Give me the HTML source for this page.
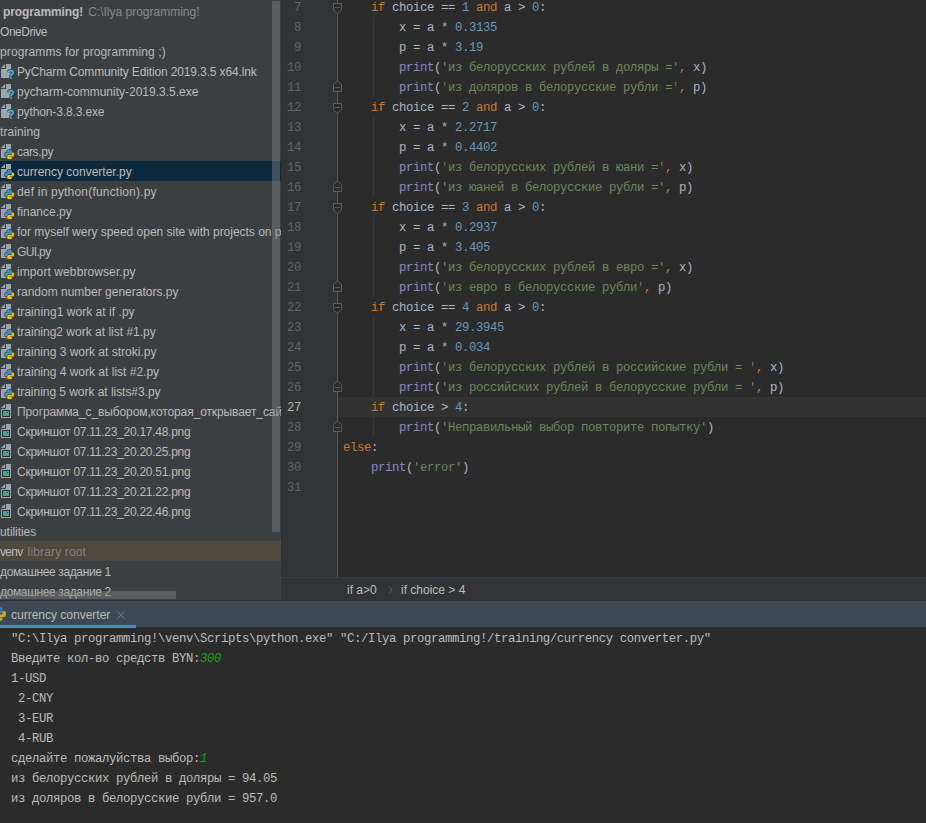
<!DOCTYPE html>
<html><head><meta charset="utf-8"><style>
*{margin:0;padding:0;box-sizing:border-box}
html,body{width:926px;height:823px;overflow:hidden;background:#2b2b2b}
body{position:relative;font-family:"Liberation Sans",sans-serif}
.abs{position:absolute}
#proj{position:absolute;left:0;top:0;width:281px;height:600px;background:#3c3f41;overflow:hidden}
.t{position:absolute;height:20px;line-height:20px;font-size:12px;color:#bbbbbb;white-space:pre}
.t b{font-weight:bold}
.g{color:#8a8a8a}
.sel{position:absolute;left:0;width:281px;height:20px;background:#0d293e}
.lib{position:absolute;left:0;width:281px;height:20px;background:#4d493d}
.ic{position:absolute;left:0;width:16px;height:16px}
.ic svg,.abs svg{display:block}
#vs{position:absolute;left:272px;top:1px;width:8px;height:531px;background:rgba(128,128,128,.45)}
#hs{position:absolute;left:0;top:591px;width:176px;height:8px;background:rgba(128,128,128,.45)}
#gut{position:absolute;left:281px;top:0;width:57px;height:577px;background:#313335}
#ed{position:absolute;left:338px;top:0;width:588px;height:577px;background:#2b2b2b;overflow:hidden}
#curl{position:absolute;left:338px;top:397px;width:588px;height:20px;background:#323232}
.cl{position:absolute;left:343px;height:20px;line-height:20px;font-family:"Liberation Mono",monospace;font-size:12.3px;letter-spacing:-0.381px;color:#a9b7c6;white-space:pre}
.k{color:#cc7832}.n{color:#6897bb}.s{color:#6a8759}.b{color:#8888c6}
.ln{position:absolute;left:281px;width:20px;text-align:right;height:20px;line-height:20px;font-family:"Liberation Mono",monospace;font-size:12.3px;letter-spacing:-0.381px;color:#606366}
.ln.cur{color:#b4b4b4}
.guide{position:absolute;left:373px;width:1px;background:#393939}
#foldline{position:absolute;left:337px;top:0;width:1px;height:577px;background:#555555}
#bc{position:absolute;left:281px;top:577px;width:645px;height:23px;background:#313335;border-top:1px solid #393b3d}
.bct{position:absolute;font-size:12px;color:#bbbbbb;white-space:pre;line-height:20px;height:20px}
#tabbar{position:absolute;left:0;top:600px;width:926px;height:27px;background:#3d4854;border-top:1px solid #303030}
#tabul{position:absolute;left:0;top:625px;width:136px;height:3px;background:#4a88c7}
#con{position:absolute;left:0;top:628px;width:926px;height:195px;background:#2b2b2b}
.co{position:absolute;left:11px;height:20px;line-height:20px;font-family:"Liberation Mono",monospace;font-size:12.3px;letter-spacing:-0.381px;color:#bbbbbb;white-space:pre}
.in{color:#14a014;font-style:italic}
</style></head><body>
<div id="proj">
<div class="t" style="top:2px;left:3px"><b style="letter-spacing:-0.1px">programming!</b><span class="g" style="margin-left:5px">C:\Ilya programming!</span></div>
<div class="t" style="top:22px;left:0px;letter-spacing:-0.457px;">OneDrive</div>
<div class="t" style="top:42px;left:0px;letter-spacing:0.111px;">programms for programming ;)</div>
<div class="ic" style="top:63px"><svg width="16" height="16" viewBox="0 0 16 16"><path d="M1 5L5 1V5Z" fill="#9aa7b0"/><rect x="6" y="1" width="5" height="5" fill="#9aa7b0"/><rect x="1" y="6" width="10" height="9" fill="#9aa7b0"/><path d="M8.6 9.5Q8.8 7.6 10.9 7.6Q13.2 7.6 13.2 9.6Q13.2 10.9 11.8 11.6Q11 12 11 13.4" fill="none" stroke="#3c3f41" stroke-width="3.4"/><circle cx="11" cy="15.1" r="1.9" fill="#3c3f41"/><path d="M8.6 9.5Q8.8 7.6 10.9 7.6Q13.2 7.6 13.2 9.6Q13.2 10.9 11.8 11.6Q11 12 11 13.4" fill="none" stroke="#40b6e0" stroke-width="1.7"/><circle cx="11" cy="15.1" r="0.95" fill="#40b6e0"/></svg></div>
<div class="t" style="top:62px;left:17px;letter-spacing:-0.139px;">PyCharm Community Edition 2019.3.5 x64.lnk</div>
<div class="ic" style="top:83px"><svg width="16" height="16" viewBox="0 0 16 16"><path d="M1 5L5 1V5Z" fill="#9aa7b0"/><rect x="6" y="1" width="5" height="5" fill="#9aa7b0"/><rect x="1" y="6" width="10" height="9" fill="#9aa7b0"/><path d="M8.6 9.5Q8.8 7.6 10.9 7.6Q13.2 7.6 13.2 9.6Q13.2 10.9 11.8 11.6Q11 12 11 13.4" fill="none" stroke="#3c3f41" stroke-width="3.4"/><circle cx="11" cy="15.1" r="1.9" fill="#3c3f41"/><path d="M8.6 9.5Q8.8 7.6 10.9 7.6Q13.2 7.6 13.2 9.6Q13.2 10.9 11.8 11.6Q11 12 11 13.4" fill="none" stroke="#40b6e0" stroke-width="1.7"/><circle cx="11" cy="15.1" r="0.95" fill="#40b6e0"/></svg></div>
<div class="t" style="top:82px;left:17px;">pycharm-community-2019.3.5.exe</div>
<div class="ic" style="top:103px"><svg width="16" height="16" viewBox="0 0 16 16"><path d="M1 5L5 1V5Z" fill="#9aa7b0"/><rect x="6" y="1" width="5" height="5" fill="#9aa7b0"/><rect x="1" y="6" width="10" height="9" fill="#9aa7b0"/><path d="M8.6 9.5Q8.8 7.6 10.9 7.6Q13.2 7.6 13.2 9.6Q13.2 10.9 11.8 11.6Q11 12 11 13.4" fill="none" stroke="#3c3f41" stroke-width="3.4"/><circle cx="11" cy="15.1" r="1.9" fill="#3c3f41"/><path d="M8.6 9.5Q8.8 7.6 10.9 7.6Q13.2 7.6 13.2 9.6Q13.2 10.9 11.8 11.6Q11 12 11 13.4" fill="none" stroke="#40b6e0" stroke-width="1.7"/><circle cx="11" cy="15.1" r="0.95" fill="#40b6e0"/></svg></div>
<div class="t" style="top:102px;left:17px;letter-spacing:-0.127px;">python-3.8.3.exe</div>
<div class="t" style="top:122px;left:0px;letter-spacing:0.086px;">training</div>
<div class="ic" style="top:143px"><svg width="16" height="16" viewBox="0 0 16 16"><path d="M1 5L5 1V5Z" fill="#9aa7b0"/><rect x="6" y="1" width="5" height="5" fill="#9aa7b0"/><rect x="1" y="6" width="10" height="9" fill="#9aa7b0"/><g transform="translate(4.3 6.3) scale(0.66)"><path d="M7.5 1C5 1 4.5 2 4.5 3V4.5H8V5H3C1.5 5 1 6.5 1 8C1 9.8 1.7 11 3 11H4.5V9C4.5 8 5.3 7.5 6.3 7.5H9.7C10.7 7.5 11.5 6.8 11.5 5.8V3C11.5 1.8 10.5 1 9 1Z" fill="#3c3f41" stroke="#3c3f41" stroke-width="2.2"/><path d="M7.5 1C5 1 4.5 2 4.5 3V4.5H8V5H3C1.5 5 1 6.5 1 8C1 9.8 1.7 11 3 11H4.5V9C4.5 8 5.3 7.5 6.3 7.5H9.7C10.7 7.5 11.5 6.8 11.5 5.8V3C11.5 1.8 10.5 1 9 1Z" fill="#3c3f41" stroke="#3c3f41" stroke-width="2.2" transform="rotate(180 8 8)"/></g><g transform="translate(4.3 6.3) scale(0.66)"><path d="M7.5 1C5 1 4.5 2 4.5 3V4.5H8V5H3C1.5 5 1 6.5 1 8C1 9.8 1.7 11 3 11H4.5V9C4.5 8 5.3 7.5 6.3 7.5H9.7C10.7 7.5 11.5 6.8 11.5 5.8V3C11.5 1.8 10.5 1 9 1Z" fill="#3d92c9"/><path d="M7.5 1C5 1 4.5 2 4.5 3V4.5H8V5H3C1.5 5 1 6.5 1 8C1 9.8 1.7 11 3 11H4.5V9C4.5 8 5.3 7.5 6.3 7.5H9.7C10.7 7.5 11.5 6.8 11.5 5.8V3C11.5 1.8 10.5 1 9 1Z" fill="#f5c400" transform="rotate(180 8 8)"/></g></svg></div>
<div class="t" style="top:142px;left:17px;letter-spacing:-0.350px;">cars.py</div>
<div class="sel" style="top:161px"></div>
<div class="ic" style="top:163px"><svg width="16" height="16" viewBox="0 0 16 16"><path d="M1 5L5 1V5Z" fill="#9aa7b0"/><rect x="6" y="1" width="5" height="5" fill="#9aa7b0"/><rect x="1" y="6" width="10" height="9" fill="#9aa7b0"/><g transform="translate(4.3 6.3) scale(0.66)"><path d="M7.5 1C5 1 4.5 2 4.5 3V4.5H8V5H3C1.5 5 1 6.5 1 8C1 9.8 1.7 11 3 11H4.5V9C4.5 8 5.3 7.5 6.3 7.5H9.7C10.7 7.5 11.5 6.8 11.5 5.8V3C11.5 1.8 10.5 1 9 1Z" fill="#0d293e" stroke="#0d293e" stroke-width="2.2"/><path d="M7.5 1C5 1 4.5 2 4.5 3V4.5H8V5H3C1.5 5 1 6.5 1 8C1 9.8 1.7 11 3 11H4.5V9C4.5 8 5.3 7.5 6.3 7.5H9.7C10.7 7.5 11.5 6.8 11.5 5.8V3C11.5 1.8 10.5 1 9 1Z" fill="#0d293e" stroke="#0d293e" stroke-width="2.2" transform="rotate(180 8 8)"/></g><g transform="translate(4.3 6.3) scale(0.66)"><path d="M7.5 1C5 1 4.5 2 4.5 3V4.5H8V5H3C1.5 5 1 6.5 1 8C1 9.8 1.7 11 3 11H4.5V9C4.5 8 5.3 7.5 6.3 7.5H9.7C10.7 7.5 11.5 6.8 11.5 5.8V3C11.5 1.8 10.5 1 9 1Z" fill="#3d92c9"/><path d="M7.5 1C5 1 4.5 2 4.5 3V4.5H8V5H3C1.5 5 1 6.5 1 8C1 9.8 1.7 11 3 11H4.5V9C4.5 8 5.3 7.5 6.3 7.5H9.7C10.7 7.5 11.5 6.8 11.5 5.8V3C11.5 1.8 10.5 1 9 1Z" fill="#f5c400" transform="rotate(180 8 8)"/></g></svg></div>
<div class="t" style="top:162px;left:17px;">currency converter.py</div>
<div class="ic" style="top:183px"><svg width="16" height="16" viewBox="0 0 16 16"><path d="M1 5L5 1V5Z" fill="#9aa7b0"/><rect x="6" y="1" width="5" height="5" fill="#9aa7b0"/><rect x="1" y="6" width="10" height="9" fill="#9aa7b0"/><g transform="translate(4.3 6.3) scale(0.66)"><path d="M7.5 1C5 1 4.5 2 4.5 3V4.5H8V5H3C1.5 5 1 6.5 1 8C1 9.8 1.7 11 3 11H4.5V9C4.5 8 5.3 7.5 6.3 7.5H9.7C10.7 7.5 11.5 6.8 11.5 5.8V3C11.5 1.8 10.5 1 9 1Z" fill="#3c3f41" stroke="#3c3f41" stroke-width="2.2"/><path d="M7.5 1C5 1 4.5 2 4.5 3V4.5H8V5H3C1.5 5 1 6.5 1 8C1 9.8 1.7 11 3 11H4.5V9C4.5 8 5.3 7.5 6.3 7.5H9.7C10.7 7.5 11.5 6.8 11.5 5.8V3C11.5 1.8 10.5 1 9 1Z" fill="#3c3f41" stroke="#3c3f41" stroke-width="2.2" transform="rotate(180 8 8)"/></g><g transform="translate(4.3 6.3) scale(0.66)"><path d="M7.5 1C5 1 4.5 2 4.5 3V4.5H8V5H3C1.5 5 1 6.5 1 8C1 9.8 1.7 11 3 11H4.5V9C4.5 8 5.3 7.5 6.3 7.5H9.7C10.7 7.5 11.5 6.8 11.5 5.8V3C11.5 1.8 10.5 1 9 1Z" fill="#3d92c9"/><path d="M7.5 1C5 1 4.5 2 4.5 3V4.5H8V5H3C1.5 5 1 6.5 1 8C1 9.8 1.7 11 3 11H4.5V9C4.5 8 5.3 7.5 6.3 7.5H9.7C10.7 7.5 11.5 6.8 11.5 5.8V3C11.5 1.8 10.5 1 9 1Z" fill="#f5c400" transform="rotate(180 8 8)"/></g></svg></div>
<div class="t" style="top:182px;left:17px;letter-spacing:0.192px;">def in python(function).py</div>
<div class="ic" style="top:203px"><svg width="16" height="16" viewBox="0 0 16 16"><path d="M1 5L5 1V5Z" fill="#9aa7b0"/><rect x="6" y="1" width="5" height="5" fill="#9aa7b0"/><rect x="1" y="6" width="10" height="9" fill="#9aa7b0"/><g transform="translate(4.3 6.3) scale(0.66)"><path d="M7.5 1C5 1 4.5 2 4.5 3V4.5H8V5H3C1.5 5 1 6.5 1 8C1 9.8 1.7 11 3 11H4.5V9C4.5 8 5.3 7.5 6.3 7.5H9.7C10.7 7.5 11.5 6.8 11.5 5.8V3C11.5 1.8 10.5 1 9 1Z" fill="#3c3f41" stroke="#3c3f41" stroke-width="2.2"/><path d="M7.5 1C5 1 4.5 2 4.5 3V4.5H8V5H3C1.5 5 1 6.5 1 8C1 9.8 1.7 11 3 11H4.5V9C4.5 8 5.3 7.5 6.3 7.5H9.7C10.7 7.5 11.5 6.8 11.5 5.8V3C11.5 1.8 10.5 1 9 1Z" fill="#3c3f41" stroke="#3c3f41" stroke-width="2.2" transform="rotate(180 8 8)"/></g><g transform="translate(4.3 6.3) scale(0.66)"><path d="M7.5 1C5 1 4.5 2 4.5 3V4.5H8V5H3C1.5 5 1 6.5 1 8C1 9.8 1.7 11 3 11H4.5V9C4.5 8 5.3 7.5 6.3 7.5H9.7C10.7 7.5 11.5 6.8 11.5 5.8V3C11.5 1.8 10.5 1 9 1Z" fill="#3d92c9"/><path d="M7.5 1C5 1 4.5 2 4.5 3V4.5H8V5H3C1.5 5 1 6.5 1 8C1 9.8 1.7 11 3 11H4.5V9C4.5 8 5.3 7.5 6.3 7.5H9.7C10.7 7.5 11.5 6.8 11.5 5.8V3C11.5 1.8 10.5 1 9 1Z" fill="#f5c400" transform="rotate(180 8 8)"/></g></svg></div>
<div class="t" style="top:202px;left:17px;">finance.py</div>
<div class="ic" style="top:223px"><svg width="16" height="16" viewBox="0 0 16 16"><path d="M1 5L5 1V5Z" fill="#9aa7b0"/><rect x="6" y="1" width="5" height="5" fill="#9aa7b0"/><rect x="1" y="6" width="10" height="9" fill="#9aa7b0"/><g transform="translate(4.3 6.3) scale(0.66)"><path d="M7.5 1C5 1 4.5 2 4.5 3V4.5H8V5H3C1.5 5 1 6.5 1 8C1 9.8 1.7 11 3 11H4.5V9C4.5 8 5.3 7.5 6.3 7.5H9.7C10.7 7.5 11.5 6.8 11.5 5.8V3C11.5 1.8 10.5 1 9 1Z" fill="#3c3f41" stroke="#3c3f41" stroke-width="2.2"/><path d="M7.5 1C5 1 4.5 2 4.5 3V4.5H8V5H3C1.5 5 1 6.5 1 8C1 9.8 1.7 11 3 11H4.5V9C4.5 8 5.3 7.5 6.3 7.5H9.7C10.7 7.5 11.5 6.8 11.5 5.8V3C11.5 1.8 10.5 1 9 1Z" fill="#3c3f41" stroke="#3c3f41" stroke-width="2.2" transform="rotate(180 8 8)"/></g><g transform="translate(4.3 6.3) scale(0.66)"><path d="M7.5 1C5 1 4.5 2 4.5 3V4.5H8V5H3C1.5 5 1 6.5 1 8C1 9.8 1.7 11 3 11H4.5V9C4.5 8 5.3 7.5 6.3 7.5H9.7C10.7 7.5 11.5 6.8 11.5 5.8V3C11.5 1.8 10.5 1 9 1Z" fill="#3d92c9"/><path d="M7.5 1C5 1 4.5 2 4.5 3V4.5H8V5H3C1.5 5 1 6.5 1 8C1 9.8 1.7 11 3 11H4.5V9C4.5 8 5.3 7.5 6.3 7.5H9.7C10.7 7.5 11.5 6.8 11.5 5.8V3C11.5 1.8 10.5 1 9 1Z" fill="#f5c400" transform="rotate(180 8 8)"/></g></svg></div>
<div class="t" style="top:222px;left:17px;letter-spacing:-0.021px;">for myself wery speed open site with projects on pycharm.py</div>
<div class="ic" style="top:243px"><svg width="16" height="16" viewBox="0 0 16 16"><path d="M1 5L5 1V5Z" fill="#9aa7b0"/><rect x="6" y="1" width="5" height="5" fill="#9aa7b0"/><rect x="1" y="6" width="10" height="9" fill="#9aa7b0"/><g transform="translate(4.3 6.3) scale(0.66)"><path d="M7.5 1C5 1 4.5 2 4.5 3V4.5H8V5H3C1.5 5 1 6.5 1 8C1 9.8 1.7 11 3 11H4.5V9C4.5 8 5.3 7.5 6.3 7.5H9.7C10.7 7.5 11.5 6.8 11.5 5.8V3C11.5 1.8 10.5 1 9 1Z" fill="#3c3f41" stroke="#3c3f41" stroke-width="2.2"/><path d="M7.5 1C5 1 4.5 2 4.5 3V4.5H8V5H3C1.5 5 1 6.5 1 8C1 9.8 1.7 11 3 11H4.5V9C4.5 8 5.3 7.5 6.3 7.5H9.7C10.7 7.5 11.5 6.8 11.5 5.8V3C11.5 1.8 10.5 1 9 1Z" fill="#3c3f41" stroke="#3c3f41" stroke-width="2.2" transform="rotate(180 8 8)"/></g><g transform="translate(4.3 6.3) scale(0.66)"><path d="M7.5 1C5 1 4.5 2 4.5 3V4.5H8V5H3C1.5 5 1 6.5 1 8C1 9.8 1.7 11 3 11H4.5V9C4.5 8 5.3 7.5 6.3 7.5H9.7C10.7 7.5 11.5 6.8 11.5 5.8V3C11.5 1.8 10.5 1 9 1Z" fill="#3d92c9"/><path d="M7.5 1C5 1 4.5 2 4.5 3V4.5H8V5H3C1.5 5 1 6.5 1 8C1 9.8 1.7 11 3 11H4.5V9C4.5 8 5.3 7.5 6.3 7.5H9.7C10.7 7.5 11.5 6.8 11.5 5.8V3C11.5 1.8 10.5 1 9 1Z" fill="#f5c400" transform="rotate(180 8 8)"/></g></svg></div>
<div class="t" style="top:242px;left:17px;letter-spacing:-0.640px;">GUI.py</div>
<div class="ic" style="top:263px"><svg width="16" height="16" viewBox="0 0 16 16"><path d="M1 5L5 1V5Z" fill="#9aa7b0"/><rect x="6" y="1" width="5" height="5" fill="#9aa7b0"/><rect x="1" y="6" width="10" height="9" fill="#9aa7b0"/><g transform="translate(4.3 6.3) scale(0.66)"><path d="M7.5 1C5 1 4.5 2 4.5 3V4.5H8V5H3C1.5 5 1 6.5 1 8C1 9.8 1.7 11 3 11H4.5V9C4.5 8 5.3 7.5 6.3 7.5H9.7C10.7 7.5 11.5 6.8 11.5 5.8V3C11.5 1.8 10.5 1 9 1Z" fill="#3c3f41" stroke="#3c3f41" stroke-width="2.2"/><path d="M7.5 1C5 1 4.5 2 4.5 3V4.5H8V5H3C1.5 5 1 6.5 1 8C1 9.8 1.7 11 3 11H4.5V9C4.5 8 5.3 7.5 6.3 7.5H9.7C10.7 7.5 11.5 6.8 11.5 5.8V3C11.5 1.8 10.5 1 9 1Z" fill="#3c3f41" stroke="#3c3f41" stroke-width="2.2" transform="rotate(180 8 8)"/></g><g transform="translate(4.3 6.3) scale(0.66)"><path d="M7.5 1C5 1 4.5 2 4.5 3V4.5H8V5H3C1.5 5 1 6.5 1 8C1 9.8 1.7 11 3 11H4.5V9C4.5 8 5.3 7.5 6.3 7.5H9.7C10.7 7.5 11.5 6.8 11.5 5.8V3C11.5 1.8 10.5 1 9 1Z" fill="#3d92c9"/><path d="M7.5 1C5 1 4.5 2 4.5 3V4.5H8V5H3C1.5 5 1 6.5 1 8C1 9.8 1.7 11 3 11H4.5V9C4.5 8 5.3 7.5 6.3 7.5H9.7C10.7 7.5 11.5 6.8 11.5 5.8V3C11.5 1.8 10.5 1 9 1Z" fill="#f5c400" transform="rotate(180 8 8)"/></g></svg></div>
<div class="t" style="top:262px;left:17px;letter-spacing:0.095px;">import webbrowser.py</div>
<div class="ic" style="top:283px"><svg width="16" height="16" viewBox="0 0 16 16"><path d="M1 5L5 1V5Z" fill="#9aa7b0"/><rect x="6" y="1" width="5" height="5" fill="#9aa7b0"/><rect x="1" y="6" width="10" height="9" fill="#9aa7b0"/><g transform="translate(4.3 6.3) scale(0.66)"><path d="M7.5 1C5 1 4.5 2 4.5 3V4.5H8V5H3C1.5 5 1 6.5 1 8C1 9.8 1.7 11 3 11H4.5V9C4.5 8 5.3 7.5 6.3 7.5H9.7C10.7 7.5 11.5 6.8 11.5 5.8V3C11.5 1.8 10.5 1 9 1Z" fill="#3c3f41" stroke="#3c3f41" stroke-width="2.2"/><path d="M7.5 1C5 1 4.5 2 4.5 3V4.5H8V5H3C1.5 5 1 6.5 1 8C1 9.8 1.7 11 3 11H4.5V9C4.5 8 5.3 7.5 6.3 7.5H9.7C10.7 7.5 11.5 6.8 11.5 5.8V3C11.5 1.8 10.5 1 9 1Z" fill="#3c3f41" stroke="#3c3f41" stroke-width="2.2" transform="rotate(180 8 8)"/></g><g transform="translate(4.3 6.3) scale(0.66)"><path d="M7.5 1C5 1 4.5 2 4.5 3V4.5H8V5H3C1.5 5 1 6.5 1 8C1 9.8 1.7 11 3 11H4.5V9C4.5 8 5.3 7.5 6.3 7.5H9.7C10.7 7.5 11.5 6.8 11.5 5.8V3C11.5 1.8 10.5 1 9 1Z" fill="#3d92c9"/><path d="M7.5 1C5 1 4.5 2 4.5 3V4.5H8V5H3C1.5 5 1 6.5 1 8C1 9.8 1.7 11 3 11H4.5V9C4.5 8 5.3 7.5 6.3 7.5H9.7C10.7 7.5 11.5 6.8 11.5 5.8V3C11.5 1.8 10.5 1 9 1Z" fill="#f5c400" transform="rotate(180 8 8)"/></g></svg></div>
<div class="t" style="top:282px;left:17px;">random number generators.py</div>
<div class="ic" style="top:303px"><svg width="16" height="16" viewBox="0 0 16 16"><path d="M1 5L5 1V5Z" fill="#9aa7b0"/><rect x="6" y="1" width="5" height="5" fill="#9aa7b0"/><rect x="1" y="6" width="10" height="9" fill="#9aa7b0"/><g transform="translate(4.3 6.3) scale(0.66)"><path d="M7.5 1C5 1 4.5 2 4.5 3V4.5H8V5H3C1.5 5 1 6.5 1 8C1 9.8 1.7 11 3 11H4.5V9C4.5 8 5.3 7.5 6.3 7.5H9.7C10.7 7.5 11.5 6.8 11.5 5.8V3C11.5 1.8 10.5 1 9 1Z" fill="#3c3f41" stroke="#3c3f41" stroke-width="2.2"/><path d="M7.5 1C5 1 4.5 2 4.5 3V4.5H8V5H3C1.5 5 1 6.5 1 8C1 9.8 1.7 11 3 11H4.5V9C4.5 8 5.3 7.5 6.3 7.5H9.7C10.7 7.5 11.5 6.8 11.5 5.8V3C11.5 1.8 10.5 1 9 1Z" fill="#3c3f41" stroke="#3c3f41" stroke-width="2.2" transform="rotate(180 8 8)"/></g><g transform="translate(4.3 6.3) scale(0.66)"><path d="M7.5 1C5 1 4.5 2 4.5 3V4.5H8V5H3C1.5 5 1 6.5 1 8C1 9.8 1.7 11 3 11H4.5V9C4.5 8 5.3 7.5 6.3 7.5H9.7C10.7 7.5 11.5 6.8 11.5 5.8V3C11.5 1.8 10.5 1 9 1Z" fill="#3d92c9"/><path d="M7.5 1C5 1 4.5 2 4.5 3V4.5H8V5H3C1.5 5 1 6.5 1 8C1 9.8 1.7 11 3 11H4.5V9C4.5 8 5.3 7.5 6.3 7.5H9.7C10.7 7.5 11.5 6.8 11.5 5.8V3C11.5 1.8 10.5 1 9 1Z" fill="#f5c400" transform="rotate(180 8 8)"/></g></svg></div>
<div class="t" style="top:302px;left:17px;letter-spacing:0.039px;">training1 work at if .py</div>
<div class="ic" style="top:323px"><svg width="16" height="16" viewBox="0 0 16 16"><path d="M1 5L5 1V5Z" fill="#9aa7b0"/><rect x="6" y="1" width="5" height="5" fill="#9aa7b0"/><rect x="1" y="6" width="10" height="9" fill="#9aa7b0"/><g transform="translate(4.3 6.3) scale(0.66)"><path d="M7.5 1C5 1 4.5 2 4.5 3V4.5H8V5H3C1.5 5 1 6.5 1 8C1 9.8 1.7 11 3 11H4.5V9C4.5 8 5.3 7.5 6.3 7.5H9.7C10.7 7.5 11.5 6.8 11.5 5.8V3C11.5 1.8 10.5 1 9 1Z" fill="#3c3f41" stroke="#3c3f41" stroke-width="2.2"/><path d="M7.5 1C5 1 4.5 2 4.5 3V4.5H8V5H3C1.5 5 1 6.5 1 8C1 9.8 1.7 11 3 11H4.5V9C4.5 8 5.3 7.5 6.3 7.5H9.7C10.7 7.5 11.5 6.8 11.5 5.8V3C11.5 1.8 10.5 1 9 1Z" fill="#3c3f41" stroke="#3c3f41" stroke-width="2.2" transform="rotate(180 8 8)"/></g><g transform="translate(4.3 6.3) scale(0.66)"><path d="M7.5 1C5 1 4.5 2 4.5 3V4.5H8V5H3C1.5 5 1 6.5 1 8C1 9.8 1.7 11 3 11H4.5V9C4.5 8 5.3 7.5 6.3 7.5H9.7C10.7 7.5 11.5 6.8 11.5 5.8V3C11.5 1.8 10.5 1 9 1Z" fill="#3d92c9"/><path d="M7.5 1C5 1 4.5 2 4.5 3V4.5H8V5H3C1.5 5 1 6.5 1 8C1 9.8 1.7 11 3 11H4.5V9C4.5 8 5.3 7.5 6.3 7.5H9.7C10.7 7.5 11.5 6.8 11.5 5.8V3C11.5 1.8 10.5 1 9 1Z" fill="#f5c400" transform="rotate(180 8 8)"/></g></svg></div>
<div class="t" style="top:322px;left:17px;">training2 work at list #1.py</div>
<div class="ic" style="top:343px"><svg width="16" height="16" viewBox="0 0 16 16"><path d="M1 5L5 1V5Z" fill="#9aa7b0"/><rect x="6" y="1" width="5" height="5" fill="#9aa7b0"/><rect x="1" y="6" width="10" height="9" fill="#9aa7b0"/><g transform="translate(4.3 6.3) scale(0.66)"><path d="M7.5 1C5 1 4.5 2 4.5 3V4.5H8V5H3C1.5 5 1 6.5 1 8C1 9.8 1.7 11 3 11H4.5V9C4.5 8 5.3 7.5 6.3 7.5H9.7C10.7 7.5 11.5 6.8 11.5 5.8V3C11.5 1.8 10.5 1 9 1Z" fill="#3c3f41" stroke="#3c3f41" stroke-width="2.2"/><path d="M7.5 1C5 1 4.5 2 4.5 3V4.5H8V5H3C1.5 5 1 6.5 1 8C1 9.8 1.7 11 3 11H4.5V9C4.5 8 5.3 7.5 6.3 7.5H9.7C10.7 7.5 11.5 6.8 11.5 5.8V3C11.5 1.8 10.5 1 9 1Z" fill="#3c3f41" stroke="#3c3f41" stroke-width="2.2" transform="rotate(180 8 8)"/></g><g transform="translate(4.3 6.3) scale(0.66)"><path d="M7.5 1C5 1 4.5 2 4.5 3V4.5H8V5H3C1.5 5 1 6.5 1 8C1 9.8 1.7 11 3 11H4.5V9C4.5 8 5.3 7.5 6.3 7.5H9.7C10.7 7.5 11.5 6.8 11.5 5.8V3C11.5 1.8 10.5 1 9 1Z" fill="#3d92c9"/><path d="M7.5 1C5 1 4.5 2 4.5 3V4.5H8V5H3C1.5 5 1 6.5 1 8C1 9.8 1.7 11 3 11H4.5V9C4.5 8 5.3 7.5 6.3 7.5H9.7C10.7 7.5 11.5 6.8 11.5 5.8V3C11.5 1.8 10.5 1 9 1Z" fill="#f5c400" transform="rotate(180 8 8)"/></g></svg></div>
<div class="t" style="top:342px;left:17px;">training 3 work at stroki.py</div>
<div class="ic" style="top:363px"><svg width="16" height="16" viewBox="0 0 16 16"><path d="M1 5L5 1V5Z" fill="#9aa7b0"/><rect x="6" y="1" width="5" height="5" fill="#9aa7b0"/><rect x="1" y="6" width="10" height="9" fill="#9aa7b0"/><g transform="translate(4.3 6.3) scale(0.66)"><path d="M7.5 1C5 1 4.5 2 4.5 3V4.5H8V5H3C1.5 5 1 6.5 1 8C1 9.8 1.7 11 3 11H4.5V9C4.5 8 5.3 7.5 6.3 7.5H9.7C10.7 7.5 11.5 6.8 11.5 5.8V3C11.5 1.8 10.5 1 9 1Z" fill="#3c3f41" stroke="#3c3f41" stroke-width="2.2"/><path d="M7.5 1C5 1 4.5 2 4.5 3V4.5H8V5H3C1.5 5 1 6.5 1 8C1 9.8 1.7 11 3 11H4.5V9C4.5 8 5.3 7.5 6.3 7.5H9.7C10.7 7.5 11.5 6.8 11.5 5.8V3C11.5 1.8 10.5 1 9 1Z" fill="#3c3f41" stroke="#3c3f41" stroke-width="2.2" transform="rotate(180 8 8)"/></g><g transform="translate(4.3 6.3) scale(0.66)"><path d="M7.5 1C5 1 4.5 2 4.5 3V4.5H8V5H3C1.5 5 1 6.5 1 8C1 9.8 1.7 11 3 11H4.5V9C4.5 8 5.3 7.5 6.3 7.5H9.7C10.7 7.5 11.5 6.8 11.5 5.8V3C11.5 1.8 10.5 1 9 1Z" fill="#3d92c9"/><path d="M7.5 1C5 1 4.5 2 4.5 3V4.5H8V5H3C1.5 5 1 6.5 1 8C1 9.8 1.7 11 3 11H4.5V9C4.5 8 5.3 7.5 6.3 7.5H9.7C10.7 7.5 11.5 6.8 11.5 5.8V3C11.5 1.8 10.5 1 9 1Z" fill="#f5c400" transform="rotate(180 8 8)"/></g></svg></div>
<div class="t" style="top:362px;left:17px;">training 4 work at list #2.py</div>
<div class="ic" style="top:383px"><svg width="16" height="16" viewBox="0 0 16 16"><path d="M1 5L5 1V5Z" fill="#9aa7b0"/><rect x="6" y="1" width="5" height="5" fill="#9aa7b0"/><rect x="1" y="6" width="10" height="9" fill="#9aa7b0"/><g transform="translate(4.3 6.3) scale(0.66)"><path d="M7.5 1C5 1 4.5 2 4.5 3V4.5H8V5H3C1.5 5 1 6.5 1 8C1 9.8 1.7 11 3 11H4.5V9C4.5 8 5.3 7.5 6.3 7.5H9.7C10.7 7.5 11.5 6.8 11.5 5.8V3C11.5 1.8 10.5 1 9 1Z" fill="#3c3f41" stroke="#3c3f41" stroke-width="2.2"/><path d="M7.5 1C5 1 4.5 2 4.5 3V4.5H8V5H3C1.5 5 1 6.5 1 8C1 9.8 1.7 11 3 11H4.5V9C4.5 8 5.3 7.5 6.3 7.5H9.7C10.7 7.5 11.5 6.8 11.5 5.8V3C11.5 1.8 10.5 1 9 1Z" fill="#3c3f41" stroke="#3c3f41" stroke-width="2.2" transform="rotate(180 8 8)"/></g><g transform="translate(4.3 6.3) scale(0.66)"><path d="M7.5 1C5 1 4.5 2 4.5 3V4.5H8V5H3C1.5 5 1 6.5 1 8C1 9.8 1.7 11 3 11H4.5V9C4.5 8 5.3 7.5 6.3 7.5H9.7C10.7 7.5 11.5 6.8 11.5 5.8V3C11.5 1.8 10.5 1 9 1Z" fill="#3d92c9"/><path d="M7.5 1C5 1 4.5 2 4.5 3V4.5H8V5H3C1.5 5 1 6.5 1 8C1 9.8 1.7 11 3 11H4.5V9C4.5 8 5.3 7.5 6.3 7.5H9.7C10.7 7.5 11.5 6.8 11.5 5.8V3C11.5 1.8 10.5 1 9 1Z" fill="#f5c400" transform="rotate(180 8 8)"/></g></svg></div>
<div class="t" style="top:382px;left:17px;letter-spacing:-0.043px;">training 5 work at lists#3.py</div>
<div class="ic" style="top:403px"><svg width="16" height="16" viewBox="0 0 16 16"><path d="M1 5L5 1V5Z" fill="#9aa7b0"/><rect x="6" y="1" width="5" height="5" fill="#9aa7b0"/><rect x="1" y="6" width="10" height="9" fill="#9aa7b0"/><rect x="2" y="7" width="8" height="7" fill="#2f3234"/><rect x="3" y="8" width="6" height="5" fill="#3c9fcf"/><path d="M3 13V10.9Q4.6 9.4 6.2 10.3L9 12V13Z" fill="#5aa545"/><circle cx="7.5" cy="9.4" r="0.7" fill="#2f4a5a"/></svg></div>
<div class="t" style="top:402px;left:17px;letter-spacing:-0.104px;">Программа_с_выбором,которая_открывает_сайты.png</div>
<div class="ic" style="top:423px"><svg width="16" height="16" viewBox="0 0 16 16"><path d="M1 5L5 1V5Z" fill="#9aa7b0"/><rect x="6" y="1" width="5" height="5" fill="#9aa7b0"/><rect x="1" y="6" width="10" height="9" fill="#9aa7b0"/><rect x="2" y="7" width="8" height="7" fill="#2f3234"/><rect x="3" y="8" width="6" height="5" fill="#3c9fcf"/><path d="M3 13V10.9Q4.6 9.4 6.2 10.3L9 12V13Z" fill="#5aa545"/><circle cx="7.5" cy="9.4" r="0.7" fill="#2f4a5a"/></svg></div>
<div class="t" style="top:422px;left:17px;letter-spacing:-0.266px;">Скриншот 07.11.23_20.17.48.png</div>
<div class="ic" style="top:443px"><svg width="16" height="16" viewBox="0 0 16 16"><path d="M1 5L5 1V5Z" fill="#9aa7b0"/><rect x="6" y="1" width="5" height="5" fill="#9aa7b0"/><rect x="1" y="6" width="10" height="9" fill="#9aa7b0"/><rect x="2" y="7" width="8" height="7" fill="#2f3234"/><rect x="3" y="8" width="6" height="5" fill="#3c9fcf"/><path d="M3 13V10.9Q4.6 9.4 6.2 10.3L9 12V13Z" fill="#5aa545"/><circle cx="7.5" cy="9.4" r="0.7" fill="#2f4a5a"/></svg></div>
<div class="t" style="top:442px;left:17px;letter-spacing:-0.266px;">Скриншот 07.11.23_20.20.25.png</div>
<div class="ic" style="top:463px"><svg width="16" height="16" viewBox="0 0 16 16"><path d="M1 5L5 1V5Z" fill="#9aa7b0"/><rect x="6" y="1" width="5" height="5" fill="#9aa7b0"/><rect x="1" y="6" width="10" height="9" fill="#9aa7b0"/><rect x="2" y="7" width="8" height="7" fill="#2f3234"/><rect x="3" y="8" width="6" height="5" fill="#3c9fcf"/><path d="M3 13V10.9Q4.6 9.4 6.2 10.3L9 12V13Z" fill="#5aa545"/><circle cx="7.5" cy="9.4" r="0.7" fill="#2f4a5a"/></svg></div>
<div class="t" style="top:462px;left:17px;letter-spacing:-0.266px;">Скриншот 07.11.23_20.20.51.png</div>
<div class="ic" style="top:483px"><svg width="16" height="16" viewBox="0 0 16 16"><path d="M1 5L5 1V5Z" fill="#9aa7b0"/><rect x="6" y="1" width="5" height="5" fill="#9aa7b0"/><rect x="1" y="6" width="10" height="9" fill="#9aa7b0"/><rect x="2" y="7" width="8" height="7" fill="#2f3234"/><rect x="3" y="8" width="6" height="5" fill="#3c9fcf"/><path d="M3 13V10.9Q4.6 9.4 6.2 10.3L9 12V13Z" fill="#5aa545"/><circle cx="7.5" cy="9.4" r="0.7" fill="#2f4a5a"/></svg></div>
<div class="t" style="top:482px;left:17px;letter-spacing:-0.266px;">Скриншот 07.11.23_20.21.22.png</div>
<div class="ic" style="top:503px"><svg width="16" height="16" viewBox="0 0 16 16"><path d="M1 5L5 1V5Z" fill="#9aa7b0"/><rect x="6" y="1" width="5" height="5" fill="#9aa7b0"/><rect x="1" y="6" width="10" height="9" fill="#9aa7b0"/><rect x="2" y="7" width="8" height="7" fill="#2f3234"/><rect x="3" y="8" width="6" height="5" fill="#3c9fcf"/><path d="M3 13V10.9Q4.6 9.4 6.2 10.3L9 12V13Z" fill="#5aa545"/><circle cx="7.5" cy="9.4" r="0.7" fill="#2f4a5a"/></svg></div>
<div class="t" style="top:502px;left:17px;letter-spacing:-0.266px;">Скриншот 07.11.23_20.22.46.png</div>
<div class="t" style="top:522px;left:0px;letter-spacing:-0.062px;">utilities</div>
<div class="lib" style="top:541px"></div>
<div class="t" style="top:542px;left:0px"><span style="letter-spacing:-0.7px">venv</span><span class="g" style="margin-left:5px;color:#808080;letter-spacing:0.15px">library root</span></div>
<div class="t" style="top:562px;left:0px;letter-spacing:-0.365px;">домашнее задание 1</div>
<div class="t" style="top:582px;left:0px;letter-spacing:-0.365px;">домашнее задание 2</div>
<div id="vs"></div>
<div id="hs"></div>
</div>
<div id="gut"></div><div class="abs" style="left:281px;top:0;width:1px;height:600px;background:#2e3032"></div>
<div id="ed"></div>
<div id="curl"></div>
<div class="guide" style="top:17px;height:80px"></div>
<div class="guide" style="top:117px;height:80px"></div>
<div class="guide" style="top:217px;height:80px"></div>
<div class="guide" style="top:317px;height:80px"></div>
<div class="guide" style="top:417px;height:20px"></div>
<div id="foldline"></div>
<svg class="abs" style="left:0;top:0" width="926" height="577"><path d="M333.5 3.5 H341.5 V10.0 L337.5 13.5 L333.5 10.0 Z" fill="#2b2b2b" stroke="#5c5c5c"/><path d="M335 7.5 H340" stroke="#5c5c5c"/><path d="M333.5 103.5 H341.5 V110.0 L337.5 113.5 L333.5 110.0 Z" fill="#2b2b2b" stroke="#5c5c5c"/><path d="M335 107.5 H340" stroke="#5c5c5c"/><path d="M333.5 203.5 H341.5 V210.0 L337.5 213.5 L333.5 210.0 Z" fill="#2b2b2b" stroke="#5c5c5c"/><path d="M335 207.5 H340" stroke="#5c5c5c"/><path d="M333.5 303.5 H341.5 V310.0 L337.5 313.5 L333.5 310.0 Z" fill="#2b2b2b" stroke="#5c5c5c"/><path d="M335 307.5 H340" stroke="#5c5c5c"/><path d="M333.5 84.5 V91.5 H341.5 V84.5 L337.5 81.0 Z" fill="#2b2b2b" stroke="#5c5c5c"/><path d="M335 87.5 H340" stroke="#5c5c5c"/><path d="M333.5 184.5 V191.5 H341.5 V184.5 L337.5 181.0 Z" fill="#2b2b2b" stroke="#5c5c5c"/><path d="M335 187.5 H340" stroke="#5c5c5c"/><path d="M333.5 284.5 V291.5 H341.5 V284.5 L337.5 281.0 Z" fill="#2b2b2b" stroke="#5c5c5c"/><path d="M335 287.5 H340" stroke="#5c5c5c"/><path d="M333.5 384.5 V391.5 H341.5 V384.5 L337.5 381.0 Z" fill="#2b2b2b" stroke="#5c5c5c"/><path d="M335 387.5 H340" stroke="#5c5c5c"/><path d="M333.5 424.5 V431.5 H341.5 V424.5 L337.5 421.0 Z" fill="#2b2b2b" stroke="#5c5c5c"/><path d="M335 427.5 H340" stroke="#5c5c5c"/></svg>
<div class="ln" style="top:-2px">7</div>
<div class="ln" style="top:18px">8</div>
<div class="ln" style="top:38px">9</div>
<div class="ln" style="top:58px">10</div>
<div class="ln" style="top:78px">11</div>
<div class="ln" style="top:98px">12</div>
<div class="ln" style="top:118px">13</div>
<div class="ln" style="top:138px">14</div>
<div class="ln" style="top:158px">15</div>
<div class="ln" style="top:178px">16</div>
<div class="ln" style="top:198px">17</div>
<div class="ln" style="top:218px">18</div>
<div class="ln" style="top:238px">19</div>
<div class="ln" style="top:258px">20</div>
<div class="ln" style="top:278px">21</div>
<div class="ln" style="top:298px">22</div>
<div class="ln" style="top:318px">23</div>
<div class="ln" style="top:338px">24</div>
<div class="ln" style="top:358px">25</div>
<div class="ln" style="top:378px">26</div>
<div class="ln cur" style="top:398px">27</div>
<div class="ln" style="top:418px">28</div>
<div class="ln" style="top:438px">29</div>
<div class="ln" style="top:458px">30</div>
<div class="ln" style="top:478px">31</div>
<div class="cl" style="top:-2px">    <span class="k">if</span> choice == <span class="n">1</span> <span class="k">and</span> a &gt; <span class="n">0</span>:</div>
<div class="cl" style="top:18px">        x = a * <span class="n">0.3135</span></div>
<div class="cl" style="top:38px">        p = a * <span class="n">3.19</span></div>
<div class="cl" style="top:58px">        <span class="b">print</span>(<span class="s">&#x27;из белорусских рублей в доляры =&#x27;</span><span class="k">,</span> x)</div>
<div class="cl" style="top:78px">        <span class="b">print</span>(<span class="s">&#x27;из доляров в белорусские рубли =&#x27;</span><span class="k">,</span> p)</div>
<div class="cl" style="top:98px">    <span class="k">if</span> choice == <span class="n">2</span> <span class="k">and</span> a &gt; <span class="n">0</span>:</div>
<div class="cl" style="top:118px">        x = a * <span class="n">2.2717</span></div>
<div class="cl" style="top:138px">        p = a * <span class="n">0.4402</span></div>
<div class="cl" style="top:158px">        <span class="b">print</span>(<span class="s">&#x27;из белорусских рублей в юани =&#x27;</span><span class="k">,</span> x)</div>
<div class="cl" style="top:178px">        <span class="b">print</span>(<span class="s">&#x27;из юаней в белорусские рубли =&#x27;</span><span class="k">,</span> p)</div>
<div class="cl" style="top:198px">    <span class="k">if</span> choice == <span class="n">3</span> <span class="k">and</span> a &gt; <span class="n">0</span>:</div>
<div class="cl" style="top:218px">        x = a * <span class="n">0.2937</span></div>
<div class="cl" style="top:238px">        p = a * <span class="n">3.405</span></div>
<div class="cl" style="top:258px">        <span class="b">print</span>(<span class="s">&#x27;из белорусских рублей в евро =&#x27;</span><span class="k">,</span> x)</div>
<div class="cl" style="top:278px">        <span class="b">print</span>(<span class="s">&#x27;из евро в белорусские рубли&#x27;</span><span class="k">,</span> p)</div>
<div class="cl" style="top:298px">    <span class="k">if</span> choice == <span class="n">4</span> <span class="k">and</span> a &gt; <span class="n">0</span>:</div>
<div class="cl" style="top:318px">        x = a * <span class="n">29.3945</span></div>
<div class="cl" style="top:338px">        p = a * <span class="n">0.034</span></div>
<div class="cl" style="top:358px">        <span class="b">print</span>(<span class="s">&#x27;из белорусских рублей в российские рубли = &#x27;</span><span class="k">,</span> x)</div>
<div class="cl" style="top:378px">        <span class="b">print</span>(<span class="s">&#x27;из российских рублей в белорусские рубли = &#x27;</span><span class="k">,</span> p)</div>
<div class="cl" style="top:398px">    <span class="k">if</span> choice &gt; <span class="n">4</span>:</div>
<div class="cl" style="top:418px">        <span class="b">print</span>(<span class="s">&#x27;Неправильный выбор повторите попытку&#x27;</span>)</div>
<div class="cl" style="top:438px"><span class="k">else</span>:</div>
<div class="cl" style="top:458px">    <span class="b">print</span>(<span class="s">&#x27;error&#x27;</span>)</div>
<div class="cl" style="top:478px"></div>
<div id="bc">
<div class="bct" style="left:66px;top:2px">if a&gt;0</div>
<svg class="abs" style="left:106px;top:7px" width="6" height="10"><path d="M2 1.5L5 5L2 8.5" fill="none" stroke="#5f6163" stroke-width="1"/></svg>
<div class="bct" style="left:120px;top:2px">if choice &gt; 4</div>
</div>
<div id="tabbar"></div>
<div id="tabul"></div>
<div class="abs" style="left:-9px;top:606px;width:16px;height:16px"><svg width="16" height="16" viewBox="0 0 16 16"><g transform=""><path d="M7.5 1C5 1 4.5 2 4.5 3V4.5H8V5H3C1.5 5 1 6.5 1 8C1 9.8 1.7 11 3 11H4.5V9C4.5 8 5.3 7.5 6.3 7.5H9.7C10.7 7.5 11.5 6.8 11.5 5.8V3C11.5 1.8 10.5 1 9 1Z" fill="#3b7fae"/><path d="M7.5 1C5 1 4.5 2 4.5 3V4.5H8V5H3C1.5 5 1 6.5 1 8C1 9.8 1.7 11 3 11H4.5V9C4.5 8 5.3 7.5 6.3 7.5H9.7C10.7 7.5 11.5 6.8 11.5 5.8V3C11.5 1.8 10.5 1 9 1Z" fill="#c9a92a" transform="rotate(180 8 8)"/></g></svg></div>
<div class="t" style="left:11px;top:605px">currency converter</div>
<div class="abs" style="left:116px;top:610px;width:10px;height:10px"><svg width="10" height="10" viewBox="0 0 10 10"><path d="M1 1L9 9M9 1L1 9" stroke="#6b7480" stroke-width="1"/></svg></div>
<div id="con">
</div>
<div class="co" style="top:629px">&quot;C:\Ilya programming!\venv\Scripts\python.exe&quot; &quot;C:/Ilya programming!/training/currency converter.py&quot;</div>
<div class="co" style="top:649px">Введите кол-во средств BYN:<span class="in">300</span></div>
<div class="co" style="top:669px">1-USD</div>
<div class="co" style="top:689px"> 2-CNY</div>
<div class="co" style="top:709px"> 3-EUR</div>
<div class="co" style="top:729px"> 4-RUB</div>
<div class="co" style="top:749px">сделайте пожалуйства выбор:<span class="in">1</span></div>
<div class="co" style="top:769px">из белорусских рублей в доляры = 94.05</div>
<div class="co" style="top:789px">из доляров в белорусские рубли = 957.0</div>
</body></html>
